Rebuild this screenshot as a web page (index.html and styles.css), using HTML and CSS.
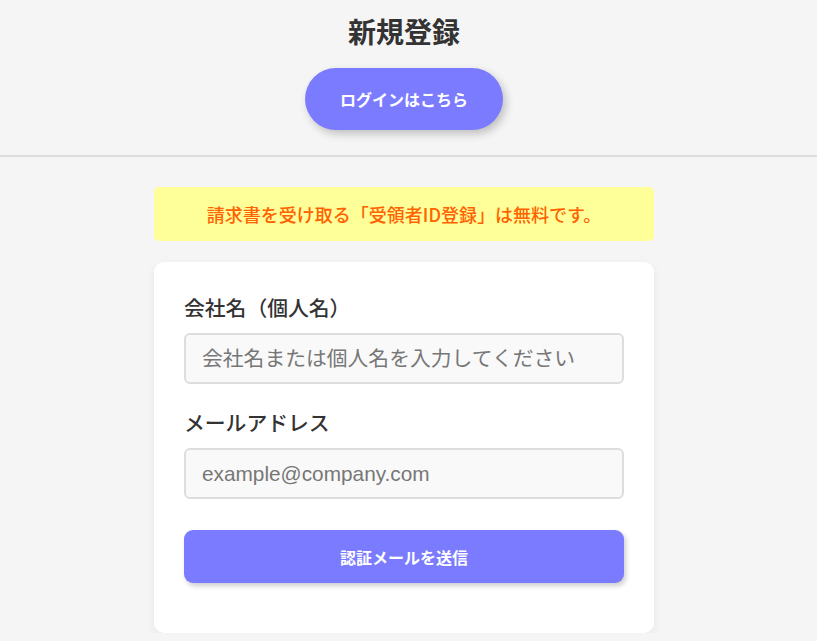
FILE: index.html
```html
<!DOCTYPE html>
<html lang="ja">
<head>
<meta charset="utf-8">
<title>新規登録</title>
<link rel="stylesheet" href="styles.css">
</head>
<body>
<header class="header">
  <h1 class="title">新規登録</h1>
  <a class="login-btn" href="#">ログインはこちら</a>
</header>
<div class="page">
  <main class="main">
    <div class="notice">請求書を受け取る「受領者ID登録」は無料です。</div>
    <form class="card">
      <div class="group">
        <label class="label" for="company">会社名（個人名）</label>
        <input class="input" id="company" type="text" placeholder="会社名または個人名を入力してください">
      </div>
      <div class="group">
        <label class="label" for="email">メールアドレス</label>
        <input class="input" id="email" type="email" placeholder="example@company.com">
      </div>
      <button class="submit" type="button">認証メールを送信</button>
    </form>
  </main>
</div>
</body>
</html>
```
FILE: styles.css
```css
* { box-sizing: border-box; }
html, body { margin: 0; padding: 0; }
body {
  background: #f5f5f5;
  font-family: "Noto Sans CJK JP", "Noto Sans", sans-serif;
  color: #333;
}
.header {
  display: flex;
  flex-direction: column;
  align-items: center;
  padding: 14px 9px 25px 0;
  border-bottom: 2px solid #dedede;
}
.title {
  margin: 0;
  font-size: 28px;
  line-height: 34px;
  font-weight: 700;
  color: #333;
}
.login-btn {
  margin-top: 20px;
  display: block;
  width: 198px;
  height: 62px;
  line-height: 62px;
  text-align: center;
  border-radius: 31px;
  background: #7b7bff;
  color: #fff;
  font-size: 16px;
  font-weight: 700;
  text-decoration: none;
  box-shadow: 3px 4px 8px rgba(0, 0, 0, 0.22);
}
.page {
  padding-right: 9px;
}
.main {
  width: 500px;
  margin: 30px auto 0;
}
.notice {
  height: 54px;
  display: flex;
  align-items: center;
  justify-content: center;
  background: #ffff99;
  color: #ff6200;
  font-size: 18px;
  font-weight: 500;
  border-radius: 5px;
}
.card {
  margin-top: 21px;
  background: #fff;
  border-radius: 10px;
  padding: 30px 30px 50px;
  box-shadow: 0 3px 10px rgba(0, 0, 0, 0.06);
}
.group {
  margin-bottom: 23px;
}
.label {
  display: block;
  font-size: 20.8px;
  line-height: 31px;
  font-weight: 500;
  color: #333;
  margin-bottom: 10px;
}
.input {
  display: block;
  width: 100%;
  height: 51px;
  padding: 0 16px;
  border: 2px solid #dddddd;
  border-radius: 6px;
  background: #f9f9f9;
  font-family: "Liberation Sans", "Noto Sans CJK JP", sans-serif;
  font-size: 20.8px;
  color: #333;
  outline: none;
}
.input::placeholder {
  color: #777;
}
.submit {
  display: block;
  width: 100%;
  height: 53px;
  margin-top: 31px;
  border: none;
  border-radius: 9px;
  background: #7b7bff;
  color: #fff;
  font-family: "Noto Sans CJK JP", sans-serif;
  font-size: 16px;
  font-weight: 700;
  box-shadow: 2px 3px 5px rgba(0, 0, 0, 0.2);
  cursor: pointer;
}
```
